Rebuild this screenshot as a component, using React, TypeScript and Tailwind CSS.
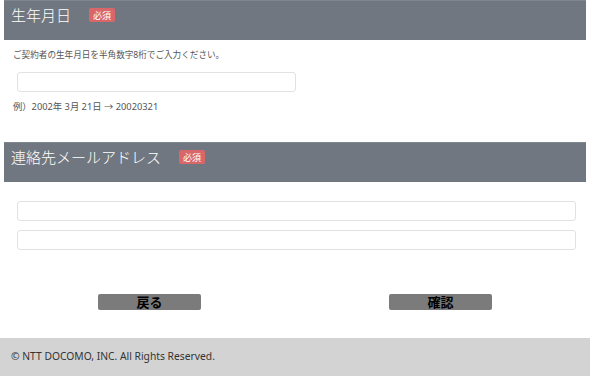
import React from 'react';

const jp = { fontFamily: '"Noto Sans", "Noto Sans CJK JP", sans-serif' };

const Badge = () => (
  <span
    className="ml-[18px] inline-flex h-[14px] items-center rounded-[2px] bg-[#d9676a] px-[4px] text-[9px] leading-none text-white"
    style={{ fontFamily: '"Noto Sans CJK JP", serif' }}
  >
    必須
  </span>
);

const SectionHead: React.FC<{ title: string }> = ({ title }) => (
  <div className="mx-[4px] h-[40px] bg-[#717780] pl-[7px] pt-[3px] border-t border-[#80868e]">
    <div className="flex h-[22px] items-center">
      <span className="text-[15px] font-light leading-[22px] text-white">{title}</span>
      <Badge />
    </div>
  </div>
);

const Field: React.FC<{ className?: string }> = ({ className }) => (
  <div className={`h-[20px] rounded-[3px] border border-[#e2e2e2] bg-white ${className ?? ''}`} />
);

export default function App() {
  return (
    <div className="flex h-[376px] w-[590px] flex-col bg-white text-[#555]" style={jp}>
      <SectionHead title="生年月日" />
      <div className="px-[13px] pt-[9px]">
        <p className="text-[8.6px] leading-[12px]">ご契約者の生年月日を半角数字8桁でご入力ください。</p>
        <Field className="ml-[4px] mt-[11px] w-[279px]" />
        <p className="mt-[9px] text-[9.3px] leading-[12px]">例）2002年 3月 21日 → 20020321</p>
      </div>

      <div className="mt-[29px]">
        <SectionHead title="連絡先メールアドレス" />
      </div>
      <div className="flex flex-col gap-[9px] pl-[17px] pr-[14px] pt-[19px]">
        <Field />
        <Field />
      </div>

      <div className="mt-[44px] flex">
        <button className="ml-[98px] flex h-[16px] w-[103px] items-center justify-center rounded-[2px] bg-[#7b7b7b] text-[13px] font-bold leading-none text-black">
          戻る
        </button>
        <button className="ml-[188px] flex h-[16px] w-[103px] items-center justify-center rounded-[2px] bg-[#7b7b7b] text-[13px] font-bold leading-none text-black">
          確認
        </button>
      </div>

      <footer className="mt-auto flex h-[38px] items-center bg-[#d3d3d3] pl-[11px] text-[10.3px] text-[#333]">
        © NTT DOCOMO, INC. All Rights Reserved.
      </footer>
    </div>
  );
}
